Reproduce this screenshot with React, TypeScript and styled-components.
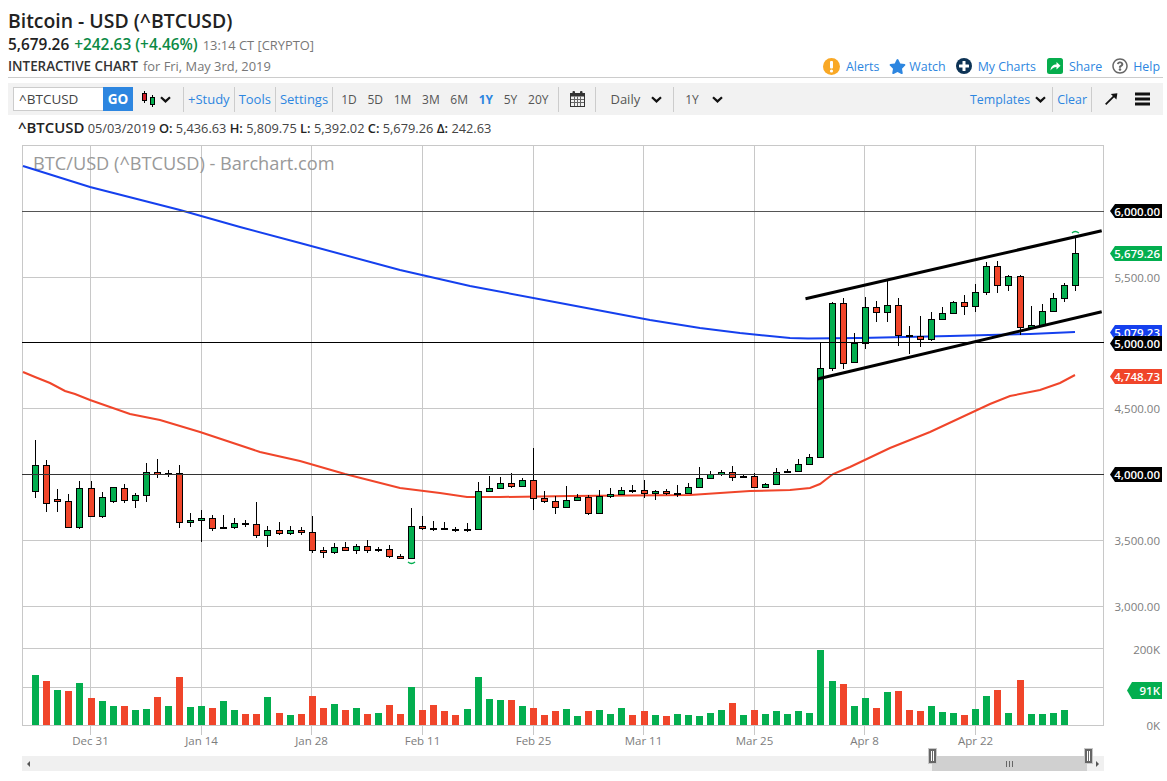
import React from "react"
import styled, { createGlobalStyle } from "styled-components"
import { FaStar, FaRegQuestionCircle } from "react-icons/fa"

// candle positions on the page: wick top, body top, body bottom, wick bottom, colour
// g = up, r = down, d = doji (drawn as a flat black bar)
type Candle = [number, number, number, number, "g" | "r" | "d"]

const candles: Candle[] = [
    [440, 465, 491, 498, "g"], [460, 465, 503, 512, "r"], [489, 499, 501, 512, "r"], [494, 501, 527, 527, "r"],
    [481, 488, 527, 529, "g"], [481, 488, 516, 517, "r"], [492, 497, 516, 518, "g"], [487, 487, 501, 503, "g"],
    [484, 488, 500, 503, "r"], [493, 495, 500, 508, "g"], [463, 472, 495, 502, "g"], [459, 472, 474, 478, "r"],
    [470, 473, 474, 477, "d"], [465, 473, 522, 528, "r"], [513, 520, 522, 527, "g"], [510, 518, 520, 542, "g"],
    [515, 518, 528, 531, "r"], [515, 527, 528, 529, "d"], [518, 523, 527, 529, "g"], [520, 523, 524, 527, "d"],
    [502, 524, 535, 538, "r"], [526, 530, 535, 547, "g"], [522, 530, 533, 535, "r"], [526, 530, 533, 535, "g"],
    [527, 530, 532, 535, "r"], [516, 532, 550, 553, "r"], [547, 550, 552, 558, "r"], [543, 547, 552, 554, "g"],
    [542, 547, 550, 551, "r"], [544, 546, 550, 554, "g"], [540, 546, 550, 553, "r"], [547, 549, 550, 552, "d"],
    [545, 549, 556, 558, "r"], [554, 556, 558, 558, "r"], [508, 526, 558, 558, "g"], [516, 526, 528, 530, "r"],
    [521, 528, 529, 531, "d"], [522, 528, 529, 530, "d"], [527, 529, 530, 532, "d"], [523, 529, 530, 532, "d"],
    [482, 491, 529, 530, "g"], [476, 488, 491, 492, "g"], [477, 483, 488, 489, "g"], [473, 483, 486, 488, "r"],
    [478, 480, 486, 487, "g"], [448, 480, 498, 510, "r"], [491, 498, 501, 503, "r"], [496, 501, 507, 514, "r"],
    [486, 500, 507, 507, "g"], [494, 497, 500, 500, "g"], [495, 497, 513, 515, "r"], [490, 496, 513, 513, "g"],
    [488, 494, 496, 498, "g"], [487, 490, 494, 495, "g"], [485, 490, 491, 493, "d"], [480, 490, 493, 498, "r"],
    [490, 491, 493, 500, "g"], [489, 491, 493, 495, "r"], [485, 493, 494, 497, "d"], [483, 487, 493, 493, "g"],
    [467, 478, 487, 488, "g"], [471, 474, 478, 479, "g"], [470, 472, 474, 476, "g"], [466, 472, 477, 481, "r"],
    [475, 476, 477, 478, "d"], [473, 476, 487, 488, "r"], [483, 484, 487, 488, "g"], [468, 472, 484, 484, "g"],
    [469, 471, 472, 473, "d"], [459, 464, 471, 472, "g"], [454, 457, 464, 465, "g"], [343, 368, 457, 457, "g"],
    [302, 303, 368, 371, "g"], [298, 303, 363, 369, "r"], [333, 343, 362, 362, "g"], [297, 307, 343, 349, "g"],
    [301, 307, 312, 322, "r"], [280, 305, 312, 322, "g"], [298, 305, 335, 346, "r"], [326, 335, 337, 354, "d"],
    [316, 336, 339, 347, "r"], [312, 319, 339, 341, "g"], [307, 313, 319, 319, "g"], [301, 302, 313, 313, "g"],
    [295, 302, 306, 315, "r"], [284, 292, 306, 312, "g"], [262, 266, 292, 295, "g"], [261, 266, 285, 293, "r"],
    [275, 276, 285, 291, "g"], [275, 276, 327, 335, "r"], [306, 325, 327, 327, "g"], [304, 311, 325, 325, "g"],
    [293, 298, 311, 311, "g"], [283, 285, 298, 302, "g"], [238, 253, 285, 291, "g"]
]

// top of each volume bar on the page, the last candle has none yet
const volumes: [number, "g" | "r"][] = [
    [675, "g"], [681, "r"], [690, "g"], [691, "r"], [683, "g"], [698, "r"], [701, "g"], [706, "g"],
    [706, "r"], [710, "g"], [709, "g"], [697, "r"], [706, "g"], [677, "r"], [707, "g"], [706, "g"],
    [708, "r"], [701, "g"], [710, "g"], [714, "r"], [714, "r"], [697, "g"], [713, "r"], [715, "g"],
    [714, "r"], [696, "r"], [708, "r"], [704, "g"], [710, "r"], [708, "g"], [714, "r"], [713, "g"],
    [705, "r"], [714, "r"], [687, "g"], [710, "r"], [705, "r"], [711, "r"], [715, "r"], [709, "g"],
    [677, "g"], [699, "g"], [700, "g"], [700, "r"], [706, "g"], [708, "r"], [715, "r"], [711, "r"],
    [709, "g"], [716, "g"], [711, "r"], [710, "g"], [714, "g"], [708, "g"], [715, "r"], [711, "r"],
    [715, "g"], [716, "r"], [714, "g"], [715, "g"], [716, "g"], [713, "g"], [710, "g"], [703, "r"],
    [715, "g"], [710, "r"], [714, "g"], [711, "g"], [714, "g"], [711, "g"], [713, "g"], [650, "g"],
    [681, "g"], [684, "r"], [706, "g"], [698, "g"], [708, "r"], [692, "g"], [691, "r"], [710, "r"],
    [711, "r"], [706, "g"], [712, "g"], [713, "g"], [715, "r"], [709, "g"], [696, "g"], [690, "r"],
    [713, "g"], [680, "r"], [714, "g"], [714, "g"], [713, "g"], [710, "g"]
]

const blueLine = "23,166 90,187 180,210 240,227 300,243 400,270 470,286 560,303 650,320 700,328 740,333 790,338 808,338.5 860,338 950,336 1030,334 1075,332"
const redLine = "23,372 35,377 50,383 65,391 75,394 90,400 130,414 160,420 200,432 260,452 300,461 345,474 400,488 440,493 467,497 500,497 570,496 690,495 750,491 790,490 810,488 820,484 833,474 850,467 890,448 930,432 990,404 1010,396 1040,390 1060,383 1075,375"

const gridX = [90, 201, 311, 422, 533, 643, 754, 864, 975]
const gridY = [277, 408, 540, 648, 687]
const dateLabels = ["Dec 31", "Jan 14", "Jan 28", "Feb 11", "Feb 25", "Mar 11", "Mar 25", "Apr 8", "Apr 22"]
const priceLabels: [string, number][] = [
    ["5,500.00", 277],
    ["4,500.00", 408],
    ["3,500.00", 540],
    ["3,000.00", 606],
    ["200K", 649],
    ["0K", 725]
]
// the 5,000 tag comes after the blue one because it covers its lower half
const tags: [string, number, number, string, number][] = [
    ["5,079.23", 325, 15, "#1540ee", 1110],
    ["5,000.00", 336, 15, "#000000", 1110],
    ["6,000.00", 204, 14, "#000000", 1110],
    ["5,679.26", 246, 15, "#03ae4f", 1110],
    ["4,748.73", 369, 15, "#f0452a", 1110],
    ["4,000.00", 467, 15, "#000000", 1110],
    ["91K", 682, 17, "#03ae4f", 1127]
]
const ranges = ["1D", "5D", "1M", "3M", "6M", "1Y", "5Y", "20Y"]

const GREEN = "#03ae4f"
const RED = "#f0452a"

const GlobalStyle = createGlobalStyle`
    html, body {
        margin: 0;
        padding: 0;
        background: #ffffff;
        font-family: "Open Sans", "Liberation Sans", sans-serif;
    }
`

const Page = styled.div`
    width: 1167px;
    height: 781px;
    overflow: hidden;
`

const Header = styled.header`
    margin: 0 4px 0 8px;
    padding-top: 8px;
`

const Title = styled.h1`
    margin: 0;
    font-size: 19.4px;
    line-height: 26px;
    font-weight: 600;
    color: #222;
`

const PriceRow = styled.div`
    display: flex;
    align-items: baseline;
    height: 22px;
    line-height: 22px;
    white-space: nowrap;
`

const Last = styled.span`
    font-size: 15.4px;
    font-weight: 600;
    color: #222;
`

const Change = styled.span`
    margin-left: 5px;
    font-size: 15.4px;
    font-weight: 600;
    color: #0b8a45;
`

const Muted = styled.span`
    margin-left: 5px;
    font-size: 12.9px;
    color: #777;
`

const InfoRow = styled.div`
    display: flex;
    align-items: center;
    justify-content: space-between;
    height: 20px;
    padding-bottom: 1px;
    border-bottom: 1px solid #cccccc;
    white-space: nowrap;
`

const InfoLabel = styled.div`
    display: flex;
    align-items: baseline;
`

const Strong = styled.span`
    font-size: 13.4px;
    font-weight: 600;
    color: #333;
`

const HeaderLinks = styled.nav`
    display: flex;
    align-items: center;
    padding-right: 3px;
`

const HeaderLink = styled.a<{ $gap: number; $iconGap: number }>`
    display: flex;
    align-items: center;
    gap: ${p => p.$iconGap}px;
    margin-left: ${p => p.$gap}px;
    font-size: 12.4px;
    color: #2d86e0;
`

const Toolbar = styled.div`
    display: flex;
    align-items: center;
    height: 32px;
    margin-top: 5px;
    padding: 0 13px 0 5px;
    background: #f2f2f2;
    font-size: 13px;
    white-space: nowrap;
`

const SymbolInput = styled.div`
    box-sizing: border-box;
    width: 90px;
    height: 24px;
    padding-left: 5px;
    line-height: 22px;
    font-size: 13.5px;
    color: #444;
    background: #ffffff;
    border: 1px solid #cccccc;
    border-right: 0;
`

const GoButton = styled.div`
    width: 30px;
    height: 24px;
    line-height: 24px;
    text-align: center;
    font-size: 13.5px;
    font-weight: 700;
    color: #ffffff;
    background: #2d86e0;
`

const Sep = styled.span<{ $left?: number }>`
    width: 1px;
    height: 25px;
    margin-left: ${p => p.$left ?? 0}px;
    background: #cccccc;
`

const ToolLink = styled.a`
    padding: 0 4px;
    color: #2d86e0;
`

const RangeButton = styled.a<{ $active?: boolean; $left: number }>`
    margin-left: ${p => p.$left}px;
    font-size: 12px;
    font-weight: ${p => (p.$active ? 700 : 400)};
    color: ${p => (p.$active ? "#2d86e0" : "#555")};
`

const PlainLabel = styled.span<{ $left: number }>`
    margin-left: ${p => p.$left}px;
    color: #555;
`

const RightGroup = styled.div`
    display: flex;
    align-items: center;
    margin-left: auto;
    font-size: 12.4px;
`

const IconSlot = styled.svg<{ $left?: number }>`
    display: block;
    flex-shrink: 0;
    margin-left: ${p => p.$left ?? 0}px;
`

const Ohlc = styled.div`
    height: 24px;
    padding-left: 10px;
    line-height: 24px;
    font-size: 12.8px;
    color: #444;
    white-space: nowrap;

    b {
        font-weight: 600;
        color: #222;
    }
`

const OhlcSymbol = styled.b`
    font-size: 14.9px;
`

const ChartSvg = styled.svg`
    display: block;
    font-family: "Open Sans", "Liberation Sans", sans-serif;
`

const Watermark = styled.text`
    font-size: 18.2px;
    fill: #999999;
`

const AxisLabel = styled.text`
    font-size: 11.5px;
    fill: #7d7d7d;
`

const TagLabel = styled.text`
    font-size: 11.5px;
    font-weight: 600;
    fill: #ffffff;
`

const Scrollbar = styled.div`
    position: relative;
    width: 1082px;
    height: 15px;
    margin-left: 22px;
    background: #f0f0f0;
`

const ScrollArrow = styled.span<{ $side: "left" | "right" }>`
    position: absolute;
    top: 5px;
    ${p => p.$side}: 5px;
    width: 0;
    height: 0;
    border-top: 3px solid transparent;
    border-bottom: 3px solid transparent;
    ${p => (p.$side === "left" ? "border-right: 3px solid #555;" : "border-left: 3px solid #555;")}
`

const Thumb = styled.div`
    position: absolute;
    top: 0;
    left: 910px;
    width: 155px;
    height: 15px;
    background: #d0d0d0;
    display: flex;
    align-items: center;
    justify-content: center;
    gap: 2px;
`

const Grip = styled.span`
    width: 1px;
    height: 6px;
    background: #666;
`

const Handle = styled.div<{ $left: number }>`
    position: absolute;
    top: -8px;
    left: ${p => p.$left}px;
    box-sizing: border-box;
    width: 9px;
    height: 16px;
    display: flex;
    align-items: center;
    justify-content: center;
    gap: 1px;
    background: #666;
    border: 1px solid #c8c8c8;
`

const HandleBar = styled.span`
    width: 1px;
    height: 10px;
    background: #ffffff;
`

function Chevron({ left }: { left: number }) {
    return (
        <IconSlot $left={left} width="11" height="7" viewBox="0 0 11 7">
            <polyline points="1,1.2 5.5,5.4 10,1.2" fill="none" stroke="#111" strokeWidth="2.2" />
        </IconSlot>
    )
}

function CandleIcon() {
    return (
        <IconSlot $left={8} width="16" height="16" viewBox="0 0 16 16">
            <line x1="3.5" y1="0" x2="3.5" y2="12" stroke="#000" />
            <rect x="1.5" y="2.5" width="4" height="7" fill="#d0202a" stroke="#000" />
            <line x1="11.5" y1="4" x2="11.5" y2="16" stroke="#000" />
            <rect x="9.5" y="6.5" width="4" height="7" fill="#03ae4f" stroke="#000" />
        </IconSlot>
    )
}

function CalendarIcon() {
    return (
        <IconSlot $left={11} width="15" height="16" viewBox="0 0 15 16">
            <rect x="0.5" y="2.5" width="14" height="13" fill="#f2f2f2" stroke="#333" />
            <rect x="0.5" y="2.5" width="14" height="3" fill="#333" />
            <rect x="2.5" y="0" width="2.5" height="4" rx="1" fill="#333" />
            <rect x="10" y="0" width="2.5" height="4" rx="1" fill="#333" />
            <path d="M4.5 5.5V15M7.5 5.5V15M10.5 5.5V15M1 8.5H14M1 11.5H14" stroke="#666" strokeWidth="1" />
        </IconSlot>
    )
}

function ArrowIcon() {
    return (
        <IconSlot $left={13} width="13" height="12" viewBox="0 0 13 12">
            <line x1="0.7" y1="11.3" x2="9.5" y2="2.6" stroke="#111" strokeWidth="1.8" />
            <polygon points="5.8,1 12.4,0.2 11.4,6.6" fill="#111" />
        </IconSlot>
    )
}

function MenuIcon() {
    return (
        <IconSlot $left={17} width="15" height="14" viewBox="0 0 15 14">
            <rect x="0" y="0.5" width="15" height="3" fill="#111" />
            <rect x="0" y="5.5" width="15" height="3" fill="#111" />
            <rect x="0" y="10.5" width="15" height="3" fill="#111" />
        </IconSlot>
    )
}

function AlertIcon() {
    return (
        <IconSlot width="17" height="17" viewBox="0 0 17 17">
            <circle cx="8.5" cy="8.5" r="8.5" fill="#f9a825" />
            <rect x="7" y="3" width="3" height="7.5" rx="1" fill="#ffffff" />
            <circle cx="8.5" cy="13" r="1.6" fill="#ffffff" />
        </IconSlot>
    )
}

function PlusIcon() {
    return (
        <IconSlot width="16" height="16" viewBox="0 0 16 16">
            <circle cx="8" cy="8" r="8" fill="#0d3355" />
            <rect x="6.5" y="3" width="3" height="10" rx="0.5" fill="#ffffff" />
            <rect x="3" y="6.5" width="10" height="3" rx="0.5" fill="#ffffff" />
        </IconSlot>
    )
}

function ShareIcon() {
    return (
        <IconSlot width="16" height="16" viewBox="0 0 16 16">
            <rect x="0" y="0" width="16" height="16" rx="2.5" fill="#06ad4d" />
            <path d="M3.5 12.5C3.8 8.6 6.2 6.6 9.5 6.6V4L13.5 7.8L9.5 11.4V8.9C7 8.9 5 10.1 3.5 12.5Z" fill="#ffffff" />
        </IconSlot>
    )
}

function Chart() {
    return (
        <ChartSvg width="1167" height="617" viewBox="0 139 1167 617">
            {gridX.map(x => (
                <line key={x} x1={x + 0.5} y1="145" x2={x + 0.5} y2="735" stroke="#c8c8c8" />
            ))}
            {gridY.map(y => (
                <line key={y} x1="22" y1={y + 0.5} x2="1104" y2={y + 0.5} stroke="#c8c8c8" />
            ))}
            <rect x="22.5" y="145.5" width="1081" height="580" fill="none" stroke="#c8c8c8" />
            <line x1="22" y1="606.5" x2="1104" y2="606.5" stroke="#c8c8c8" />

            <Watermark x="33" y="170">BTC/USD (^BTCUSD) - Barchart.com</Watermark>

            <polyline points={blueLine} fill="none" stroke="#1540ee" strokeWidth="2" />
            <polyline points={redLine} fill="none" stroke="#f0452a" strokeWidth="2" />

            {candles.map(([wickTop, bodyTop, bodyBottom, wickBottom, kind], i) => {
                const x = Math.round(35.2 + 11.06 * i)
                if (kind === "d") {
                    return (
                        <g key={i}>
                            <line x1={x + 0.5} y1={wickTop} x2={x + 0.5} y2={wickBottom} stroke="#000" />
                            <rect x={x - 3} y={bodyTop} width="7" height="2" fill="#000" />
                        </g>
                    )
                }
                return (
                    <g key={i}>
                        <line x1={x + 0.5} y1={wickTop} x2={x + 0.5} y2={wickBottom} stroke="#000" />
                        <rect
                            x={x - 2.5}
                            y={bodyTop + 0.5}
                            width="6"
                            height={Math.max(bodyBottom - bodyTop, 1)}
                            fill={kind === "g" ? GREEN : RED}
                            stroke="#000"
                        />
                    </g>
                )
            })}

            <path d="M408 562Q411.5 565 415 562" fill="none" stroke={GREEN} strokeWidth="1.3" />
            <path d="M1072 233Q1075 230 1079 233" fill="none" stroke={GREEN} strokeWidth="1.3" />

            {volumes.map(([top, kind], i) => (
                <rect
                    key={i}
                    x={Math.round(35.2 + 11.06 * i) - 3}
                    y={top}
                    width="7"
                    height={725 - top}
                    fill={kind === "g" ? GREEN : RED}
                />
            ))}

            <line x1="22" y1="211.5" x2="1104" y2="211.5" stroke="#555555" strokeWidth="1.2" />
            <line x1="22" y1="342.5" x2="1104" y2="342.5" stroke="#000000" strokeWidth="1.2" />
            <line x1="22" y1="474.5" x2="1104" y2="474.5" stroke="#333333" strokeWidth="1.2" />

            <line x1="805.5" y1="298.7" x2="1101.7" y2="230.7" stroke="#000" strokeWidth="3" />
            <line x1="817.5" y1="379" x2="1101.7" y2="311.7" stroke="#000" strokeWidth="3" />

            {dateLabels.map((label, i) => (
                <AxisLabel key={label} x={gridX[i] + 0.5} y="744.5" textAnchor="middle">
                    {label}
                </AxisLabel>
            ))}
            {priceLabels.map(([label, y]) => (
                <AxisLabel key={label} x="1160" y={y + 4.5} textAnchor="end">
                    {label}
                </AxisLabel>
            ))}
            {tags.map(([label, top, h, fill, left]) => (
                <g key={label}>
                    <polygon
                        points={`${left},${top + h / 2} ${left + 5},${top} 1162,${top} 1162,${top + h} ${left + 5},${top + h}`}
                        fill={fill}
                    />
                    <TagLabel x="1160" y={top + h / 2 + 4.5} textAnchor="end">
                        {label}
                    </TagLabel>
                </g>
            ))}
        </ChartSvg>
    )
}

export default function App() {
    return (
        <Page>
            <GlobalStyle />
            <Header>
                <Title>Bitcoin - USD (^BTCUSD)</Title>
                <PriceRow>
                    <Last>5,679.26</Last>
                    <Change>+242.63 (+4.46%)</Change>
                    <Muted>13:14 CT [CRYPTO]</Muted>
                </PriceRow>
                <InfoRow>
                    <InfoLabel>
                        <Strong>INTERACTIVE CHART</Strong>
                        <Muted>for Fri, May 3rd, 2019</Muted>
                    </InfoLabel>
                    <HeaderLinks>
                        <HeaderLink $gap={0} $iconGap={6}>
                            <AlertIcon />
                            Alerts
                        </HeaderLink>
                        <HeaderLink $gap={10} $iconGap={3}>
                            <FaStar size={17} color="#2d86e0" />
                            Watch
                        </HeaderLink>
                        <HeaderLink $gap={10} $iconGap={6}>
                            <PlusIcon />
                            My Charts
                        </HeaderLink>
                        <HeaderLink $gap={11} $iconGap={6}>
                            <ShareIcon />
                            Share
                        </HeaderLink>
                        <HeaderLink $gap={10} $iconGap={5}>
                            <FaRegQuestionCircle size={16} color="#666" />
                            Help
                        </HeaderLink>
                    </HeaderLinks>
                </InfoRow>
                <Toolbar>
                    <SymbolInput>^BTCUSD</SymbolInput>
                    <GoButton>GO</GoButton>
                    <CandleIcon />
                    <Chevron left={3} />
                    <Sep $left={12} />
                    <ToolLink>+Study</ToolLink>
                    <Sep />
                    <ToolLink>Tools</ToolLink>
                    <Sep />
                    <ToolLink>Settings</ToolLink>
                    <Sep />
                    {ranges.map((range, i) => (
                        <RangeButton key={range} $left={i === 0 ? 8 : 10.7} $active={range === "1Y"}>
                            {range}
                        </RangeButton>
                    ))}
                    <Sep $left={10} />
                    <CalendarIcon />
                    <Sep $left={10} />
                    <PlainLabel $left={14}>Daily</PlainLabel>
                    <Chevron left={11} />
                    <Sep $left={11} />
                    <RangeButton $left={11}>1Y</RangeButton>
                    <Chevron left={13} />
                    <RightGroup>
                        <ToolLink>Templates</ToolLink>
                        <Chevron left={1} />
                        <Sep $left={6} />
                        <ToolLink>Clear</ToolLink>
                        <Sep />
                        <ArrowIcon />
                        <MenuIcon />
                    </RightGroup>
                </Toolbar>
                <Ohlc>
                    <OhlcSymbol>^BTCUSD</OhlcSymbol> 05/03/2019 <b>O:</b> 5,436.63 <b>H:</b> 5,809.75 <b>L:</b> 5,392.02{" "}
                    <b>C:</b> 5,679.26 <b>Δ:</b> 242.63
                </Ohlc>
            </Header>
            <Chart />
            <Scrollbar>
                <ScrollArrow $side="left" />
                <Thumb>
                    <Grip />
                    <Grip />
                    <Grip />
                </Thumb>
                <Handle $left={906}>
                    <HandleBar />
                    <HandleBar />
                </Handle>
                <Handle $left={1062}>
                    <HandleBar />
                    <HandleBar />
                </Handle>
                <ScrollArrow $side="right" />
            </Scrollbar>
        </Page>
    )
}
